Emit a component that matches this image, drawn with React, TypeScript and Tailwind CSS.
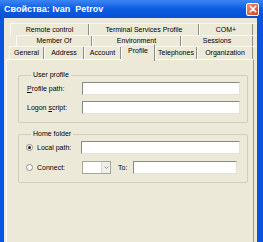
type Tab = { label: string; w: number; selected?: boolean };

const rows: { ml: string; h: string; tabs: Tab[] }[] = [
  {
    ml: "ml-[6px]",
    h: "h-[12px]",
    tabs: [
      { label: "Remote control", w: 79 },
      { label: "Terminal Services Profile", w: 110 },
      { label: "COM+", w: 54 },
    ],
  },
  {
    ml: "ml-[12px]",
    h: "h-[11px]",
    tabs: [
      { label: "Member Of", w: 76 },
      { label: "Environment", w: 89 },
      { label: "Sessions", w: 72 },
    ],
  },
  {
    ml: "ml-[5px]",
    h: "h-[13px]",
    tabs: [
      { label: "General", w: 35 },
      { label: "Address", w: 40 },
      { label: "Account", w: 37 },
      { label: "Profile", w: 34, selected: true },
      { label: "Telephones", w: 42 },
      { label: "Organization", w: 56 },
    ],
  },
];

function TabRow({ ml, h, tabs }: { ml: string; h: string; tabs: Tab[] }) {
  return (
    <div className={`flex items-start ${ml} ${h} border-t border-t-[#F8F7F2]`}>
      {tabs.map((t) =>
        t.selected ? (
          <div
            key={t.label}
            style={{ width: t.w }}
            className="relative z-10 -mt-[3px] h-[17px] flex justify-center pt-[2px] bg-[#ECE9D8] border-l border-l-white border-r border-r-[#8B8B86] border-t border-t-white"
          >
            {t.label}
          </div>
        ) : (
          <div
            key={t.label}
            style={{ width: t.w }}
            className="h-full flex items-center justify-center border-l border-l-[#FAFAF6] border-r border-r-[#8E8E88]"
          >
            {t.label}
          </div>
        )
      )}
    </div>
  );
}

function Input({ className = "" }: { className?: string }) {
  return (
    <div
      className={`h-[13px] bg-white border-t border-l border-t-[#8A8A85] border-l-[#8A8A85] border-b border-r border-b-[#E4E2D8] border-r-[#E4E2D8] ${className}`}
    />
  );
}

function Radio({ checked }: { checked?: boolean }) {
  return (
    <div className="w-[7px] h-[7px] rounded-full bg-white border border-[#8E8E88] flex items-center justify-center">
      {checked && <div className="w-[3px] h-[3px] rounded-full bg-[#222]" />}
    </div>
  );
}

export default function App() {
  return (
    <div className="w-[263px] h-[242px] overflow-hidden bg-[#0A55DF] flex flex-col font-['Liberation_Sans',Arial,sans-serif] text-[7px] leading-[8px] text-black">
      <div className="h-[18px] shrink-0 flex items-center justify-between pl-[4px] pr-[4px] bg-gradient-to-b from-[#3B86F5] via-[#0B5BE2] to-[#0A50D4]">
        <span className="text-white font-bold text-[9px] leading-[10px]">Свойства: Ivan&nbsp; Petrov</span>
        <div className="w-[13px] h-[13px] rounded-[2px] border border-white bg-gradient-to-br from-[#F08A6C] to-[#D6411F] flex items-center justify-center">
          <svg width="8" height="8" viewBox="0 0 8 8">
            <path d="M1.2 1.2 L6.8 6.8 M6.8 1.2 L1.2 6.8" stroke="white" strokeWidth="1.6" strokeLinecap="round" />
          </svg>
        </div>
      </div>

      <div className="flex-1 ml-[4px] mr-[6px] bg-[#ECE9D8] flex flex-col pt-[5px]">
        {rows.map((r, i) => (
          <TabRow key={i} ml={r.ml} h={r.h} tabs={r.tabs} />
        ))}

        <div className="flex-1 ml-[2px] mr-[3px] border-t border-l border-t-white border-l-white border-r border-r-[#9C9A90] pt-[11px] pl-[11px] pr-[5px]">
          <fieldset className="border border-[#D0CEBF] pl-[8px] pr-[7px] pt-[3px] pb-[8px] rounded-[2px]">
            <legend className="ml-[4px] px-[2px]">User profile</legend>
            <div className="flex flex-col gap-[6px]">
              <div className="flex items-center">
                <span className="w-[55px] shrink-0">
                  <span className="underline">P</span>rofile path:
                </span>
                <Input className="flex-1" />
              </div>
              <div className="flex items-center">
                <span className="w-[55px] shrink-0">
                  Logon <span className="underline">s</span>cript:
                </span>
                <Input className="flex-1" />
              </div>
            </div>
          </fieldset>

          <fieldset className="mt-[7px] border border-[#D0CEBF] pl-[7px] pr-[7px] pt-[3px] pb-[8px] rounded-[2px]">
            <legend className="ml-[5px] px-[2px]">Home folder</legend>
            <div className="flex flex-col gap-[7px]">
              <div className="flex items-center">
                <div className="w-[55px] shrink-0 flex items-center gap-[4px]">
                  <Radio checked />
                  <span>Local path:</span>
                </div>
                <Input className="flex-1" />
              </div>
              <div className="flex items-center">
                <div className="w-[56px] shrink-0 flex items-center gap-[4px]">
                  <Radio />
                  <span>Connect:</span>
                </div>
                <div className="w-[29px] h-[13px] bg-white border border-[#A5A59C] flex justify-end">
                  <div className="w-[9px] h-full bg-[#F1F0EA] border-l border-l-[#D8D6CC] flex items-center justify-center">
                    <svg width="5" height="3" viewBox="0 0 5 3">
                      <path d="M0.5 0.5 L2.5 2.5 L4.5 0.5" stroke="#9A9A94" strokeWidth="1" fill="none" />
                    </svg>
                  </div>
                </div>
                <span className="ml-[7px] w-[15px] shrink-0">To:</span>
                <Input className="w-[104px] mr-[3px]" />
              </div>
            </div>
          </fieldset>
        </div>
      </div>
    </div>
  );
}
